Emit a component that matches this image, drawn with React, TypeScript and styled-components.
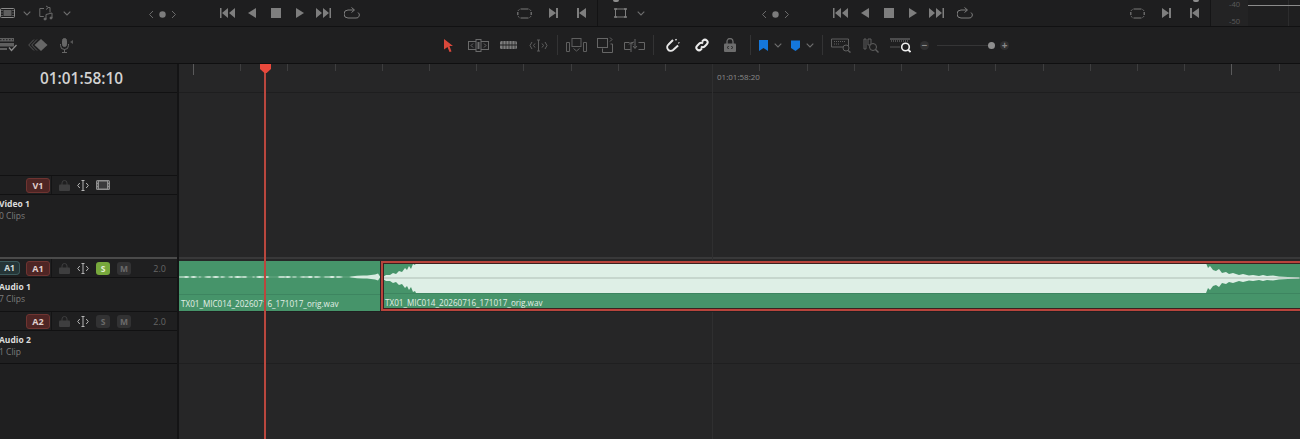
import styled, { createGlobalStyle } from "styled-components";

const GlobalStyle = createGlobalStyle`
  html, body {
    margin: 0;
    padding: 0;
    background: #1f1f20;
  }
  body {
    font-family: "Open Sans", "Noto Sans", sans-serif;
    overflow: hidden;
  }
`;

const Wrapper = styled.div`
  width: 1300px;
  height: 439px;
  display: flex;
  flex-direction: column;
  overflow: hidden;
  background: #1f1f20;
`;

const TopBar = styled.div`
  height: 26px;
  flex: none;
  display: flex;
  background: #1e1e1f;
  border-bottom: 1px solid #111112;
`;

const Pane = styled.div<{ $first?: boolean }>`
  position: relative;
  width: 613px;
  flex: none;
  display: flex;
  align-items: center;
  margin-left: ${(p) => (p.$first ? "-15px" : "0")};
  padding-left: ${(p) => (p.$first ? "15px" : "16px")};
  box-sizing: border-box;
  border-right: ${(p) => (p.$first ? "1px solid #131314" : "none")};
`;

const SourceGroup = styled.div<{ $width: number; $gap: number }>`
  width: ${(p) => p.$width}px;
  flex: none;
  display: flex;
  align-items: center;
  gap: ${(p) => p.$gap}px;
`;

const NavGroup = styled.div`
  width: 72px;
  flex: none;
  display: flex;
  align-items: center;
  gap: 4px;
  padding-top: 2px;
`;

const Transport = styled.div`
  width: 297px;
  flex: none;
  display: flex;
  align-items: center;
  gap: 12px;
`;

const LoopGroup = styled.div`
  display: flex;
  align-items: center;
  gap: 17px;
`;

const TopStub = styled.div<{ $left: number }>`
  position: absolute;
  top: 0;
  left: ${(p) => p.$left}px;
  width: 6px;
  height: 2px;
  background: #8d8d8d;
  border-radius: 0 0 2px 2px;
`;

const Meter = styled.div`
  flex: 1;
  margin-left: -1px;
  display: flex;
  background: #1f1f20;
  border-left: 1px solid #151516;
`;

const MeterScale = styled.div`
  width: 37px;
  flex: none;
  display: flex;
  flex-direction: column;
  align-items: flex-end;
  justify-content: space-between;
  padding: 0 8px 0 0;
  box-sizing: border-box;
  height: 26px;
  font-size: 7.5px;
  line-height: 9px;
  color: #5c5c5c;
  background: #232324;
`;

const MeterLane = styled.div`
  flex: 1;
  padding-top: 5px;
  background: linear-gradient(to right, transparent 40px, #2c2c2d 40px, #2c2c2d 41px, transparent 41px);
`;

const MeterLine = styled.div`
  height: 1px;
  background: #8b8b8b;
`;

const ToolBar = styled.div`
  height: 36px;
  flex: none;
  display: flex;
  align-items: center;
  background: #1f1f20;
  border-bottom: 1px solid #0f0f10;
`;

const LeftTools = styled.div`
  width: 434px;
  flex: none;
  display: flex;
  align-items: center;
  gap: 11px;
  margin-left: -1px;
`;

const Slot = styled.div<{ $w: number }>`
  width: ${(p) => p.$w}px;
  flex: none;
  display: flex;
  align-items: center;
  justify-content: center;
`;

const Separator = styled.div`
  width: 1px;
  height: 20px;
  flex: none;
  background: #333334;
`;

const ZoomTrack = styled.div`
  width: 55px;
  height: 1px;
  flex: none;
  position: relative;
  background: #353536;
`;

const ZoomKnob = styled.div`
  position: absolute;
  right: -3px;
  top: -3px;
  width: 7px;
  height: 7px;
  border-radius: 50%;
  background: #8e8e8e;
`;

const ZoomButton = styled.div`
  width: 9px;
  height: 9px;
  flex: none;
  border-radius: 50%;
  background: #2f2f30;
  color: #8a8a8a;
  font-size: 10px;
  font-weight: 700;
  line-height: 9px;
  text-align: center;
`;

const Body = styled.div`
  flex: 1;
  display: flex;
  min-height: 0;
`;

const Headers = styled.div`
  width: 177px;
  flex: none;
  display: flex;
  flex-direction: column;
  background: #1f1f20;
`;

const Timecode = styled.div`
  height: 29px;
  flex: none;
  box-sizing: border-box;
  padding-left: 40px;
  display: flex;
  align-items: center;
  font-size: 15.4px;
  font-weight: 600;
  color: #d2d2d2;
  border-bottom: 1px solid #111112;
`;

const HeaderSpacer = styled.div`
  height: 83px;
  flex: none;
  border-bottom: 1px solid #111112;
  box-sizing: border-box;
`;

const ControlRow = styled.div`
  height: 19px;
  flex: none;
  display: flex;
  align-items: center;
  box-sizing: border-box;
  border-bottom: 1px solid #111112;
`;

const PatchCell = styled.div`
  width: 26px;
  flex: none;
`;

const Patch = styled.div`
  width: 20px;
  height: 14px;
  box-sizing: border-box;
  border: 1px solid #3c5a5c;
  border-left: none;
  border-radius: 0 4px 4px 0;
  background: #253537;
  font-size: 8.5px;
  font-weight: 700;
  line-height: 12px;
  text-align: center;
  color: #d4dcdc;
`;

const TrackTag = styled.div`
  width: 24px;
  height: 15px;
  flex: none;
  box-sizing: border-box;
  border: 1px solid #6f3431;
  border-radius: 3px;
  background: #4e2524;
  font-size: 9px;
  font-weight: 700;
  line-height: 13px;
  text-align: center;
  color: #e0d0ce;
`;

const TagDivider = styled.div`
  width: 1px;
  align-self: stretch;
  margin: 0 7px 0 1px;
  background: #141415;
`;

const RowIcons = styled.div`
  display: flex;
  align-items: center;
  gap: 7px;
`;

const ToggleButton = styled.div<{ $on?: boolean }>`
  width: 14px;
  height: 13px;
  flex: none;
  border-radius: 3px;
  background: ${(p) => (p.$on ? "#77a83c" : "#323233")};
  color: ${(p) => (p.$on ? "#e4eed6" : "#6a6a6a")};
  font-size: 8.5px;
  font-weight: 700;
  line-height: 13px;
  text-align: center;
`;

const Channels = styled.div`
  margin-left: auto;
  padding-right: 11px;
  font-size: 9px;
  color: #666;
`;

const TrackInfo = styled.div<{ $h: number; $noLine?: boolean }>`
  height: ${(p) => p.$h}px;
  flex: none;
  box-sizing: border-box;
  padding: 3px 0 0 0;
  margin-left: -1px;
  border-bottom: ${(p) => (p.$noLine ? "none" : "1px solid #111112")};
`;

const TrackName = styled.div`
  font-size: 8.5px;
  font-weight: 700;
  line-height: 12px;
  color: #dcdcdc;
`;

const ClipCount = styled.div`
  font-size: 8.5px;
  line-height: 11px;
  color: #7d7d7d;
`;

const Divider = styled.div<{ $dim?: boolean }>`
  height: 2px;
  flex: none;
  margin-top: -1px;
  background: ${(p) => (p.$dim ? "#383839" : "#4a4a4a")};
`;

const Gutter = styled.div`
  width: 2px;
  flex: none;
  background: #141415;
`;

const Timeline = styled.div`
  flex: 1;
  position: relative;
  display: flex;
  flex-direction: column;
  min-width: 0;
  background: #262627;
`;

const Ruler = styled.div`
  height: 29px;
  flex: none;
  box-sizing: border-box;
  border-bottom: 1px solid #1e1e1f;
  padding-left: 538px;
  padding-top: 7px;
  background-image: repeating-linear-gradient(
      to right,
      #5a5a5b 0,
      #5a5a5b 1px,
      transparent 1px,
      transparent 519.2px
    ),
    repeating-linear-gradient(
      to right,
      #3e3e3f 0,
      #3e3e3f 1px,
      transparent 1px,
      transparent 47.2px
    );
  background-size: 100% 11px, 100% 7px;
  background-repeat: no-repeat;
  background-position: 14px 0, 14px 0;
  font-size: 8px;
  line-height: 11px;
  color: #8a8a8a;
`;

const VideoLane = styled.div`
  height: 165px;
  flex: none;
  box-sizing: border-box;
`;

const AudioLane = styled.div`
  position: relative;
  z-index: 1;
  height: 53px;
  flex: none;
  box-sizing: border-box;
  padding-top: 2px;
  display: flex;
  border-bottom: 1px solid #1f1f20;
  overflow: hidden;
`;

const EmptyLane = styled.div`
  height: 52px;
  flex: none;
  border-bottom: 1px solid #1f1f20;
  box-sizing: border-box;
`;

const Clip = styled.div<{ $w: number; $selected?: boolean }>`
  position: relative;
  width: ${(p) => p.$w}px;
  height: 50px;
  flex: none;
  box-sizing: border-box;
  margin-left: ${(p) => (p.$selected ? "1px" : "-1px")};
  background: #46946a;
  border: ${(p) => (p.$selected ? "2px solid #b8443c" : "none")};
  outline: ${(p) => (p.$selected ? "1px solid #3c211f" : "none")};
  outline-offset: -3px;
  display: flex;
  flex-direction: column;
`;

const WaveArea = styled.div<{ $h: number }>`
  height: ${(p) => p.$h}px;
  flex: none;
  border-bottom: 1px solid #3d8560;
`;

const WaveSvg = styled.svg`
  display: block;
  width: 100%;
  height: 100%;
`;

const ClipLabel = styled.div<{ $pad: number }>`
  padding: 3px 0 0 ${(p) => p.$pad}px;
  font-size: 8.1px;
  line-height: 11px;
  white-space: nowrap;
  color: #e2efe7;
`;

const PlayLine = styled.div`
  position: absolute;
  z-index: 2;
  top: 0;
  bottom: 0;
  left: 85px;
  width: 1.5px;
  background: #b9473e;
`;

const PlayHead = styled.div`
  position: absolute;
  z-index: 2;
  top: 0;
  left: 81px;
  width: 11px;
  height: 9px;
  background: #e9493c;
  clip-path: polygon(0 0, 100% 0, 100% 55%, 60% 100%, 40% 100%, 0 55%);
`;

const MajorLine = styled.div`
  position: absolute;
  top: 0;
  bottom: 0;
  left: 533px;
  width: 1px;
  background: #2f2f30;
`;

const Svg = styled.svg<{ $ml?: number }>`
  display: block;
  flex: none;
  fill: none;
  margin-left: ${(p) => p.$ml || 0}px;
`;

type IconProps = { c?: string };

const Chevron = ({ c = "#6e6e6e" }: IconProps) => (
  <Svg width="8" height="5" viewBox="0 0 8 5" stroke={c} strokeWidth="1.1">
    <path d="M.7 .7L4 4 7.300 .7" />
  </Svg>
);

const FilmIcon = ({ c = "#8a8a8a" }: IconProps) => (
  <Svg width="15" height="10" viewBox="0 0 15 10">
    <rect x=".5" y=".5" width="14" height="9" rx="1" stroke={c} />
    <rect x="3.500" y="2" width="8" height="6" fill={c} opacity=".6" />
    <path d="M1.500 2.500h1M1.500 5h1M1.500 7.500h1M12.500 2.500h1M12.500 5h1M12.500 7.500h1" stroke={c} />
  </Svg>
);

const SyncMusicIcon = () => (
  <Svg width="16" height="16" viewBox="0 0 16 16" stroke="#6a6a6a">
    <path d="M5 3.500H.8v8h4M7 1l2.500 1.500-2.500 2M9 2.500H11v5" />
    <path d="M7 14.500V9.500l6-1.500v5" />
    <circle cx="6" cy="14" r="1" fill="#6a6a6a" />
    <circle cx="12" cy="13" r="1" fill="#6a6a6a" />
  </Svg>
);

const CropIcon = () => (
  <Svg width="13" height="10" viewBox="0 0 13 10" stroke="#7d7d7d">
    <rect x="1.500" y="1" width="10" height="8" />
    <path d="M0 1h3M0 9h3M10 1h3M10 9h3" strokeWidth="1.400" />
  </Svg>
);

const NavArrows = () => (
  <>
    <Svg width="6" height="9" viewBox="0 0 6 9" stroke="#6a6a6a">
      <path d="M5 1L1.500 4.500 5 8" />
    </Svg>
    <Svg width="9" height="9" viewBox="0 0 9 9">
      <circle cx="4.500" cy="4.500" r="3.200" fill="#7c7c7c" />
    </Svg>
    <Svg width="6" height="9" viewBox="0 0 6 9" stroke="#6a6a6a">
      <path d="M1 1l3.500 3.500L1 8" />
    </Svg>
  </>
);

const TransportIcons = () => (
  <>
    <Svg width="15" height="10" viewBox="0 0 15 10">
      <path d="M0 0h1.500v10H0zM8 0v10L2 5zM15 0v10L9 5z" fill="#7e7e7e" />
    </Svg>
    <Svg width="8" height="10" viewBox="0 0 8 10" $ml={1}>
      <path d="M8 0v10L0 5z" fill="#7e7e7e" />
    </Svg>
    <Svg width="10" height="10" viewBox="0 0 10 10" $ml={3}>
      <rect width="10" height="10" fill="#7e7e7e" />
    </Svg>
    <Svg width="8" height="10" viewBox="0 0 8 10" $ml={3}>
      <path d="M0 0v10l8-5z" fill="#7e7e7e" />
    </Svg>
    <Svg width="15" height="10" viewBox="0 0 15 10" $ml={0}>
      <path d="M15 0h-1.500v10H15zM7 0v10l6-5zM0 0v10l6-5z" fill="#7e7e7e" />
    </Svg>
    <Svg width="16" height="12" viewBox="0 0 16 12" stroke="#7e7e7e" $ml={1}>
      <path d="M10 3H4a3 3 0 0 0 0 8h8a3 3 0 0 0 2-5.500" />
      <path d="M7.500 .5L10.500 3 7.500 5.500" />
    </Svg>
  </>
);

const LoopIcons = () => (
  <>
    <Svg width="15" height="11" viewBox="0 0 15 11" stroke="#7a7a7a">
      <path d="M3.500 1h8M3.500 10h8M.8 4v3M14.200 4v3" strokeWidth="1.200" />
      <path d="M.8 3L2.500 1.300M14.200 3l-1.700-1.700M.8 8l1.700 1.700M14.200 8l-1.700 1.700" strokeWidth=".8" />
    </Svg>
    <Svg width="9" height="10" viewBox="0 0 9 10">
      <path d="M0 0v10l7-5zM7 0h2v10H7z" fill="#7e7e7e" />
    </Svg>
    <Svg width="9" height="10" viewBox="0 0 9 10" $ml={2}>
      <path d="M9 0v10L2 5zM2 0H0v10h2z" fill="#7e7e7e" />
    </Svg>
  </>
);

const ToolIcons: Record<string, React.ReactNode> = {
  select: (
    <Svg width="9" height="13" viewBox="0 0 9 13">
      <path d="M0 0l9 7H5.500L7.500 12.500l-2 .5L3.500 8 0 10.500z" fill="#d9483b" />
    </Svg>
  ),
  trim: (
    <Svg width="21" height="13" viewBox="0 0 21 13" stroke="#6a6a6a">
      <rect x=".5" y="2.500" width="20" height="8" />
      <rect x="8" y=".5" width="5" height="12" fill="#1f1f20" />
      <path d="M10.500 3v7" strokeWidth="2" />
      <path d="M5 4.500L3 6.500l2 2M16 4.500l2 2-2 2" />
    </Svg>
  ),
  blade: (
    <Svg width="17" height="10" viewBox="0 0 17 10">
      <rect y="1" width="17" height="8" rx="1.500" fill="#7d7d7d" />
      <path d="M0 5h17" stroke="#1f1f20" />
      <path d="M3 1v8M6 1v8M9 1v8M12 1v8M15 1v8" stroke="#1f1f20" strokeWidth=".7" />
    </Svg>
  ),
  dynamic: (
    <Svg width="19" height="13" viewBox="0 0 19 13" stroke="#5f5f5f">
      <path d="M9.500 1v11M8 1h3M8 12h3" />
      <path d="M3 3L1 6.500 3 10M6 4.500L4.500 6.500 6 8.500M13 4.500l1.500 2L13 8.500M16 3l2 3.500L16 10" />
    </Svg>
  ),
  insert: (
    <Svg width="21" height="15" viewBox="0 0 21 15" stroke="#5f5f5f">
      <rect x="6" y=".5" width="9" height="8" />
      <path d="M.5 4.500h3v9h-3zM17.500 4.500h3v9h-3zM7.500 10.500l3 2.500 3-2.500" />
    </Svg>
  ),
  overwrite: (
    <Svg width="16" height="16" viewBox="0 0 16 16" stroke="#666">
      <rect x=".5" y="1.500" width="10" height="9" />
      <path d="M5.500 11.500v4h10V7h-2M13 .5l2 2-2 2" />
    </Svg>
  ),
  replace: (
    <Svg width="21" height="15" viewBox="0 0 21 15" stroke="#666">
      <path d="M5.500 4.500h-5v7h6M14.500 4.500h6v7h-6" />
      <path d="M7 14V5l3-1M11 1v9M9 8l2 2.500L13 8M5 6.500L7 4.500l2 2" />
    </Svg>
  ),
  snap: (
    <Svg width="14" height="15" viewBox="0 0 14 15" stroke="#e6e6e6" strokeWidth="2">
      <path d="M7 2L2.500 6.500a3.300 3.300 0 0 0 4.600 5.500l5-4.500" />
      <path d="M9.500 1.200l1 1M12.500 4.500l.7.700" strokeWidth="1.600" />
    </Svg>
  ),
  link: (
    <Svg width="14" height="14" viewBox="0 0 14 14" stroke="#ececec" strokeWidth="2">
      <path d="M6 8.500a2.500 2.500 0 0 0 3.600 0l2.200-2.300a2.600 2.600 0 0 0-3.700-3.700L7 3.600" />
      <path d="M8 5.500a2.500 2.500 0 0 0-3.600 0L2.200 7.800a2.600 2.600 0 0 0 3.700 3.700L7 10.400" />
    </Svg>
  ),
  lock: (
    <Svg width="12" height="14" viewBox="0 0 12 14">
      <path d="M3 6V3.500a3 3 0 0 1 6 0V6" stroke="#6d6d6d" strokeWidth="1.300" />
      <rect y="5.500" width="12" height="8.500" rx="1" fill="#6d6d6d" />
      <path d="M4.500 8l-1 1.500 1 1.500M7.500 8l1 1.500-1 1.500" stroke="#1f1f20" />
    </Svg>
  ),
  flag: (
    <Svg width="9" height="11" viewBox="0 0 9 11">
      <path d="M0 0h9v11L4.500 8 0 11z" fill="#1477dc" />
    </Svg>
  ),
  marker: (
    <Svg width="9" height="11" viewBox="0 0 9 11">
      <path d="M0 .5h9v7L4.500 11 0 8z" fill="#1477dc" />
    </Svg>
  ),
  zoomA: (
    <Svg width="21" height="15" viewBox="0 0 21 15" stroke="#5f5f5f">
      <path d="M.5 1h17v8H.5z" />
      <path d="M3 3.500h12M3 6h6" strokeDasharray="1 1" />
      <circle cx="15" cy="10" r="3" fill="#1f1f20" />
      <path d="M17 12.500l2.500 2" strokeWidth="1.400" />
    </Svg>
  ),
  zoomB: (
    <Svg width="17" height="15" viewBox="0 0 17 15" stroke="#5f5f5f">
      <path d="M1 1h2v10H1zM5 1h3v6H5z" />
      <circle cx="10" cy="9" r="3.500" fill="#1f1f20" />
      <path d="M12.500 11.500l3 3" strokeWidth="1.400" />
    </Svg>
  ),
  zoomC: (
    <Svg width="21" height="15" viewBox="0 0 21 15">
      <path d="M0 1h20" stroke="#7a7a7a" />
      <path d="M1 3h18" stroke="#7a7a7a" strokeDasharray="1 1" />
      <path d="M0 9h10" stroke="#555" />
      <circle cx="15.500" cy="9" r="3.800" stroke="#efefef" strokeWidth="1.600" fill="#1f1f20" />
      <path d="M18 11.500l2.500 2.500" stroke="#efefef" strokeWidth="1.800" />
    </Svg>
  ),
  edit: (
    <Svg width="18" height="14" viewBox="0 0 18 14">
      <rect y="0" width="15" height="3.500" fill="#5f5f5f" />
      <path d="M1 1.700h13" stroke="#1f1f20" strokeDasharray="1.500 1.500" />
      <rect y="5" width="15" height="3.500" fill="#5f5f5f" />
      <path d="M0 11h8" stroke="#5f5f5f" strokeWidth="2" />
      <path d="M10 9.500l2.500 3L17.500 7" stroke="#8a8a8a" strokeWidth="1.300" />
    </Svg>
  ),
  diamonds: (
    <Svg width="20" height="12" viewBox="0 0 20 12">
      <path d="M6 .5L.7 6 6 11.500" stroke="#565656" />
      <path d="M9 .5L3.700 6 9 11.500" stroke="#565656" />
      <path d="M13 0l6.500 6-6.500 6L6.500 6z" fill="#676767" />
    </Svg>
  ),
  mic: (
    <Svg width="15" height="15" viewBox="0 0 15 15" stroke="#666">
      <rect x="3.500" y=".5" width="4" height="8" rx="2" fill="#666" />
      <path d="M1.500 6v1.500a4 4 0 0 0 8 0V6M5.500 11.500v3M3 14.500h5" />
      <path d="M9 4h2l3-2v4l-3-2" fill="#555" stroke="none" />
    </Svg>
  ),
};

const TrimRow = () => (
  <Svg width="12" height="11" viewBox="0 0 12 11" stroke="#b4b4b4">
    <path d="M6 .5v10M4.500 .5h3M4.500 10.500h3" />
    <path d="M2.800 3L.7 5.500 2.800 8M9.200 3l2.100 2.500L9.200 8" />
  </Svg>
);

const LockRow = () => (
  <Svg width="11" height="11" viewBox="0 0 11 11">
    <path d="M3 5V3a2.500 2.500 0 0 1 5 0v2" stroke="#3e3e3f" />
    <rect y="4.500" width="11" height="6.500" rx="1" fill="#3e3e3f" />
  </Svg>
);

const FilmRow = () => (
  <Svg width="14" height="10" viewBox="0 0 14 10">
    <rect width="14" height="10" rx="1.500" fill="#8e8e8e" />
    <rect x="3" y="1.500" width="8" height="7" fill="#3a3a3b" />
    <path d="M1 2h1M1 5h1M1 8h1M12 2h1M12 5h1M12 8h1" stroke="#2a2a2b" />
  </Svg>
);

// makes a mirrored outline from [x, amplitude] pairs
const wavePath = (pts: number[][], mid: number) => {
  const top = pts.map(([x, a]) => `${x},${mid - a}`);
  const bottom = [...pts].reverse().map(([x, a]) => `${x},${mid + a}`);
  return `M${top.join("L")}L${bottom.join("L")}Z`;
};

const quietWave = (from: number, to: number, seed: number) => {
  const pts: number[][] = [];
  for (let x = from; x < to; x += 2) {
    const n = Math.abs(Math.sin(x * 0.43 + seed) * Math.sin(x * 0.13));
    pts.push([x, n < 0.2 ? 0.1 : 0.3 + n * 0.7]);
  }
  return pts;
};

const clipOnePts = [
  ...quietWave(0, 176, 1),
  [180, 1.200],
  [186, 1.600],
  [190, 1.400],
  [194, 2],
  [198, 2.400],
  [201, 3.500],
  [203, 0.500],
];

const clipTwoIn = [
  [0, 1],
  [3, 3],
  [7, 3],
  [10, 5],
  [13, 4],
  [16, 7],
  [19, 6],
  [22, 10],
  [24, 8],
  [26, 12],
  [28, 9],
  [30, 14],
  [32, 13],
  [33, 15],
];

const clipTwoOut = [
  [812, 15],
  [814, 15],
  [815, 17],
  [816, 15],
  [823, 15],
  [825, 10],
  [827, 12],
  [830, 8],
  [833, 7],
  [836, 9],
  [839, 5],
  [843, 6],
  [846, 4],
  [850, 5],
  [856, 3],
  [860, 4],
  [866, 2.500],
  [870, 3],
  [876, 2],
  [880, 3],
  [884, 2],
  [890, 2.500],
  [896, 1.500],
  [905, 1],
  [916, 0.500],
];

function App() {
  const panes = [true, false];

  return (
    <Wrapper>
      <GlobalStyle />
      <TopBar>
        {panes.map((first) => (
          <Pane key={String(first)} $first={first}>
            {!first && (
              <>
                <TopStub $left={15} />
                <TopStub $left={595} />
              </>
            )}
            <SourceGroup $width={first ? 148 : 147} $gap={first ? 8 : 10}>
              {first ? (
                <>
                  <FilmIcon />
                  <Chevron />
                  <SyncMusicIcon />
                  <Chevron />
                </>
              ) : (
                <>
                  <CropIcon />
                  <Chevron />
                </>
              )}
            </SourceGroup>
            <NavGroup>
              <NavArrows />
            </NavGroup>
            <Transport>
              <TransportIcons />
            </Transport>
            <LoopGroup>
              <LoopIcons />
            </LoopGroup>
          </Pane>
        ))}
        <Meter>
          <MeterScale>
            <span>-40</span>
            <span>-50</span>
          </MeterScale>
          <MeterLane>
            <MeterLine />
          </MeterLane>
        </Meter>
      </TopBar>

      <ToolBar>
        <LeftTools>
          <Slot $w={18}>{ToolIcons.edit}</Slot>
          <Slot $w={20}>{ToolIcons.diamonds}</Slot>
          <Slot $w={15}>{ToolIcons.mic}</Slot>
        </LeftTools>
        <Slot $w={30}>{ToolIcons.select}</Slot>
        <Slot $w={30}>{ToolIcons.trim}</Slot>
        <Slot $w={30}>{ToolIcons.blade}</Slot>
        <Slot $w={30}>{ToolIcons.dynamic}</Slot>
        <Slot $w={4} />
        <Separator />
        <Slot $w={36}>{ToolIcons.insert}</Slot>
        <Slot $w={22}>{ToolIcons.overwrite}</Slot>
        <Slot $w={37}>{ToolIcons.replace}</Slot>
        <Separator />
        <Slot $w={38}>{ToolIcons.snap}</Slot>
        <Slot $w={20}>{ToolIcons.link}</Slot>
        <Slot $w={36}>{ToolIcons.lock}</Slot>
        <Slot $w={2} />
        <Separator />
        <Slot $w={24}>{ToolIcons.flag}</Slot>
        <Slot $w={6}>
          <Chevron />
        </Slot>
        <Slot $w={28}>{ToolIcons.marker}</Slot>
        <Slot $w={2}>
          <Chevron />
        </Slot>
        <Slot $w={11} />
        <Separator />
        <Slot $w={36}>{ToolIcons.zoomA}</Slot>
        <Slot $w={24}>{ToolIcons.zoomB}</Slot>
        <Slot $w={35}>{ToolIcons.zoomC}</Slot>
        <Slot $w={2} />
        <ZoomButton>−</ZoomButton>
        <Slot $w={8} />
        <ZoomTrack>
          <ZoomKnob />
        </ZoomTrack>
        <Slot $w={8} />
        <ZoomButton>+</ZoomButton>
      </ToolBar>

      <Body>
        <Headers>
          <Timecode>01:01:58:10</Timecode>
          <HeaderSpacer />

          <ControlRow>
            <PatchCell />
            <TrackTag>V1</TrackTag>
            <TagDivider />
            <RowIcons>
              <LockRow />
              <TrimRow />
              <FilmRow />
            </RowIcons>
          </ControlRow>
          <TrackInfo $h={63} $noLine>
            <TrackName>Video 1</TrackName>
            <ClipCount>0 Clips</ClipCount>
          </TrackInfo>
          <Divider />

          <ControlRow>
            <PatchCell>
              <Patch>A1</Patch>
            </PatchCell>
            <TrackTag>A1</TrackTag>
            <TagDivider />
            <RowIcons>
              <LockRow />
              <TrimRow />
              <ToggleButton $on>S</ToggleButton>
              <ToggleButton>M</ToggleButton>
            </RowIcons>
            <Channels>2.0</Channels>
          </ControlRow>
          <TrackInfo $h={34}>
            <TrackName>Audio 1</TrackName>
            <ClipCount>7 Clips</ClipCount>
          </TrackInfo>

          <ControlRow>
            <PatchCell />
            <TrackTag>A2</TrackTag>
            <TagDivider />
            <RowIcons>
              <LockRow />
              <TrimRow />
              <ToggleButton>S</ToggleButton>
              <ToggleButton>M</ToggleButton>
            </RowIcons>
            <Channels>2.0</Channels>
          </ControlRow>
          <TrackInfo $h={33}>
            <TrackName>Audio 2</TrackName>
            <ClipCount>1 Clip</ClipCount>
          </TrackInfo>
        </Headers>

        <Gutter />

        <Timeline>
          <Ruler>01:01:58:20</Ruler>
          <VideoLane />
          <Divider $dim />
          <AudioLane>
            <Clip $w={202}>
              <WaveArea $h={33}>
                <WaveSvg viewBox="0 0 203 33" preserveAspectRatio="none">
                  <path d="M0 16H203" stroke="#7fb697" strokeWidth=".6" />
                  <path d={wavePath(clipOnePts, 16)} fill="#d8ebe0" />
                </WaveSvg>
              </WaveArea>
              <ClipLabel $pad={3}>TX01_MIC014_20260716_171017_orig.wav</ClipLabel>
            </Clip>
            <Clip $w={930} $selected>
              <WaveArea $h={30}>
                <WaveSvg viewBox="0 0 926 30" preserveAspectRatio="none">
                  <path
                    d={wavePath([...clipTwoIn, ...clipTwoOut], 15)}
                    fill="#deefe6"
                  />
                  <path d="M0 15H926" stroke="#aebdb4" />
                  <path d="M33 .5H812" stroke="#fff" />
                </WaveSvg>
              </WaveArea>
              <ClipLabel $pad={2}>TX01_MIC014_20260716_171017_orig.wav</ClipLabel>
            </Clip>
          </AudioLane>
          <EmptyLane />
          <MajorLine />
          <PlayLine />
          <PlayHead />
        </Timeline>
      </Body>
    </Wrapper>
  );
}

export default App;
